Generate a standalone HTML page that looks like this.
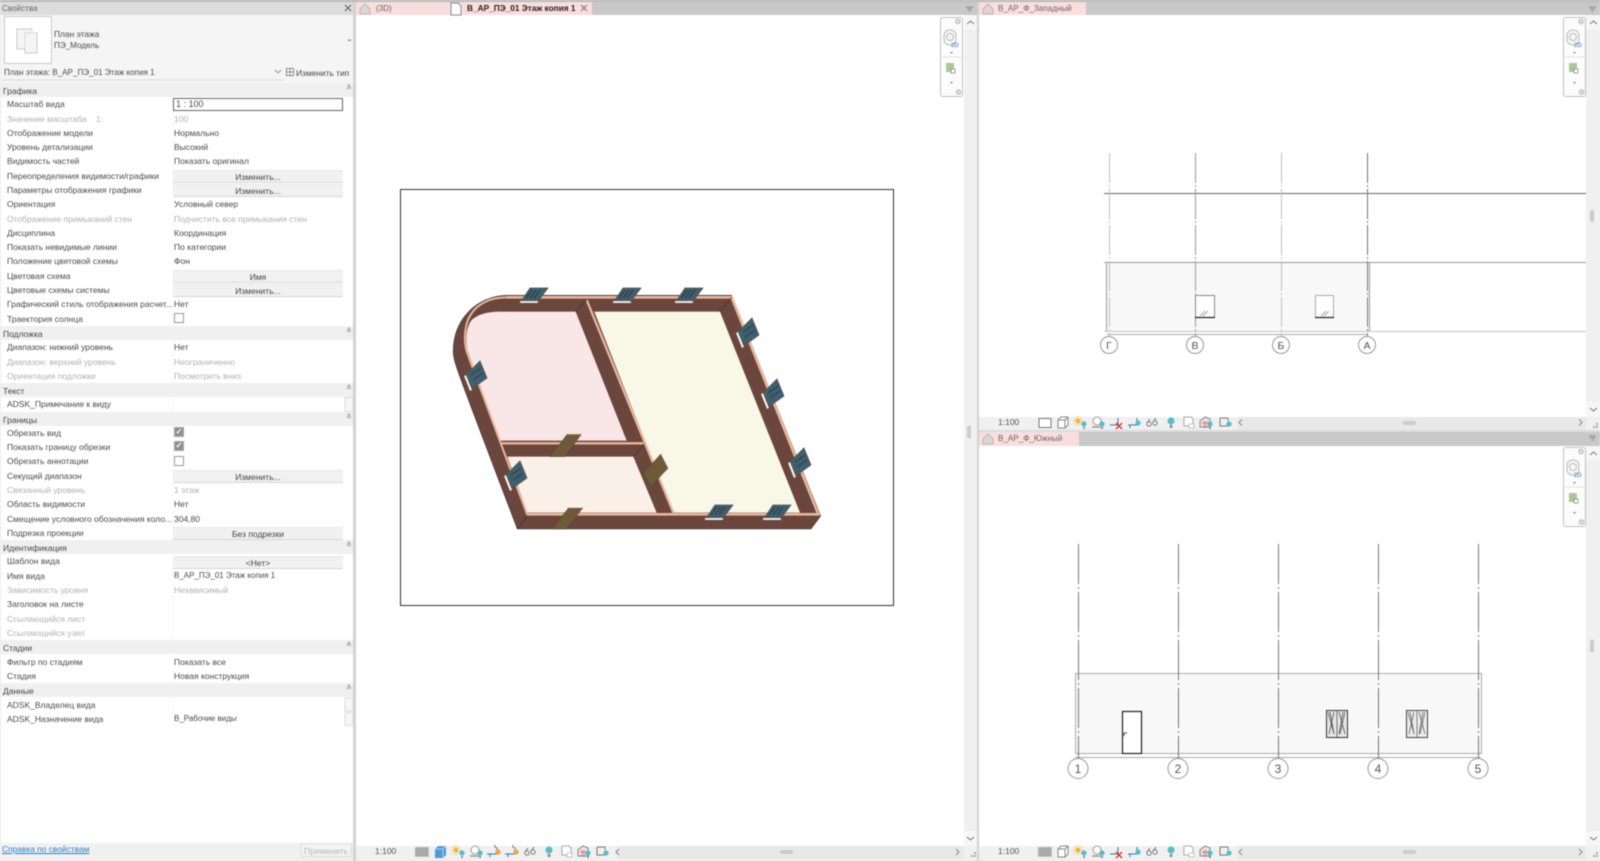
<!DOCTYPE html>
<html lang="ru"><head><meta charset="utf-8"><title>Revit</title>
<style>
html,body{margin:0;padding:0;width:1600px;height:861px;overflow:hidden;background:#efefef}
#w{position:absolute;left:0;top:0;width:1600px;height:861px;overflow:hidden;filter:blur(.45px);font:8.5px/14px "Liberation Sans",sans-serif;color:#4a4a4a}
.a,.r,.s,.l,.v,.b,.t{position:absolute;white-space:nowrap}
.s{left:1px;width:352px;height:14px;background:#f0f0f0;color:#444}
.s span{position:absolute;left:2px;top:1px}
.s i{position:absolute;left:345px;top:0;font:normal 7px/12px "Liberation Sans",sans-serif;color:#777}
.l{left:7px}.v{left:174px}
.d{color:#b0b0b0}
.b{left:173px;width:170px;height:13px;background:#f1f1f1;border-bottom:1px solid #d6d6d6;border-top:1px solid #e9e9e9;box-sizing:border-box;text-align:center;line-height:12px;color:#444;border-radius:1px}
.t{top:2px;height:13px;line-height:13px;color:#555;font-size:8.1px}
.c{position:absolute;left:174px;width:8px;height:8px;background:#fff;border:1px solid #999;box-sizing:content-box}
.k{position:absolute;left:174px;width:8px;height:8px;background:#8f8f8f;border:1px solid #a5a5a5;color:#fff;font:bold 8px/8px "Liberation Sans",sans-serif;text-align:center}
</style></head><body><div id="w">
<svg class="a" style="left:0;top:0" width="1600" height="861" viewBox="0 0 1600 861" xmlns="http://www.w3.org/2000/svg">
<defs>
<g id="tealb"><circle cx="11" cy="8" r="2.6" fill="#55bcc8"/><rect x="10.3" y="11" width="1.5" height="2" fill="#777"/></g>
<g id="i-fine"><rect x="1" y="2" width="14" height="10" fill="#c4c4c4"/><path d="M1 4h14M1 6h14M1 8h14M1 10h14M3 2v10M5 2v10M7 2v10M9 2v10M11 2v10M13 2v10" stroke="#777" stroke-width=".7" stroke-dasharray="1 1"/></g>
<g id="i-blue"><path d="M2 4l3-3h8v9l-3 3H2z" fill="#4e9bd6"/><path d="M2 4h8v9M10 4l3-3" fill="none" stroke="#a9d2ef"/></g>
<g id="i-rect"><rect x="2" y="2.5" width="12" height="9" fill="#fff" stroke="#777"/></g>
<g id="i-wire"><path d="M3 4l3-3h7v8l-3 3H3zM3 4h7v8M10 4l3-3" fill="#fff" stroke="#888"/></g>
<g id="i-sun"><circle cx="5" cy="5" r="2.6" fill="#f5b72c"/><path d="M5 0v1.5M5 8.5V10M0 5h1.5M8.5 5H10M1.5 1.5l1 1M7.5 7.5l1 1M8.5 1.5l-1 1M1.5 8.500l1-1" stroke="#f5b72c"/><use href="#tealb"/></g>
<g id="i-shadow"><circle cx="6" cy="5" r="4" fill="#fff" stroke="#999"/><path d="M1 11h9" stroke="#999" stroke-width="1.500"/><use href="#tealb"/></g>
<g id="i-crop"><path d="M1 9h9V2M8 0v3M0 9h3" fill="none" stroke="#3a74b8" stroke-width="1"/><circle cx="11" cy="7" r="2.600" fill="#f1a63f"/><path d="M3 12l0-3" stroke="#3a74b8"/></g>
<g id="i-cropt"><path d="M1 9h9V2" fill="none" stroke="#3a74b8" stroke-width="1"/><path d="M3 12l0-3" stroke="#3a74b8"/><circle cx="11" cy="7" r="2.600" fill="#55bcc8"/></g>
<g id="i-cropx"><path d="M1 9h8V2" fill="none" stroke="#3a74b8" stroke-width="1"/><path d="M7 7l6 6M13 7l-6 6" stroke="#e02b20" stroke-width="1.300"/></g>
<g id="i-glass"><circle cx="4" cy="8" r="2.200" fill="none" stroke="#777"/><circle cx="10" cy="7" r="2.200" fill="none" stroke="#777"/><path d="M2 7l3-4M8 6l3-4" stroke="#777"/></g>
<g id="i-bulb"><circle cx="8" cy="5" r="3.500" fill="#55bcc8"/><rect x="6.800" y="9" width="2.500" height="3" fill="#888"/></g>
<g id="i-dots"><path d="M3 1h7l2 2v7H3z" fill="#fff" stroke="#aaa"/><path d="M8 8h5v4H8z" fill="#fff" stroke="#999" stroke-dasharray="1 1"/></g>
<g id="i-house"><path d="M1 5l5-4 5 2v8H1z" fill="#e8e8e8" stroke="#888"/><path d="M3 7h6M5 5v7M7 5v7" stroke="#d66" stroke-width=".8"/><use href="#tealb"/></g>
<g id="i-frame"><path d="M2 2h8M2 2v8h9M10 2v3" fill="none" stroke="#777" stroke-width="1"/><circle cx="11" cy="8" r="2.600" fill="#55bcc8"/></g>
<g id="nav">
<rect x=".5" y=".5" width="22" height="79" rx="2" fill="#fcfcfc" stroke="#c0c0c0"/>
<circle cx="18" cy="4.500" r="2.300" fill="#ddd" stroke="#bbb"/>
<rect x="4" y="13" width="12" height="15" rx="5.500" fill="#f6f6f6" stroke="#bbb"/><circle cx="10" cy="20" r="3.500" fill="none" stroke="#bbb"/>
<text x="11" y="30" font-family="Liberation Sans" font-size="6" font-weight="bold" fill="#6a9bd0">2D</text>
<path d="M10 35l3 0-1.500 2z" fill="#888"/><path d="M2 40h19" stroke="#e2e2e2"/>
<rect x="6" y="46" width="8" height="9" fill="#a8c89a"/><rect x="11" y="52" width="4" height="4" fill="#fff" stroke="#888" stroke-width=".8"/>
<path d="M10 65l3 0-1.500 2z" fill="#888"/><circle cx="18.500" cy="75" r="2.300" fill="#ddd" stroke="#bbb"/>
</g>
<g id="win"><path d="M8 0H26L17 12H0z" fill="#3f5f6e" stroke="#555" stroke-width=".8"/><path d="M10 2l-6 8M14 2l-6 8M18 2l-6 8" stroke="#1e2d36" stroke-width=".7"/><path d="M-2 13H16V15H-2z" fill="#fff" stroke="#777" stroke-width=".4"/></g>
<g id="winr"><path d="M-1 13L13-1 20 16 6 26z" fill="#3f5f6e" stroke="#555" stroke-width=".8"/><path d="M4 13l10-7M6 18l10-7" stroke="#1e2d36" stroke-width=".7"/><path d="M-1 13L5 28 3 29-3 14z" fill="#fff" stroke="#777" stroke-width=".4"/></g>
</defs>

<!-- chrome backgrounds -->
<rect x="0" y="0" width="1600" height="2" fill="#b8b8b8"/>
<rect x="0" y="2" width="353" height="13" fill="#dcdcdc"/>
<rect x="1" y="15" width="352" height="68" fill="#f5f5f5"/>
<rect x="1" y="83" width="352" height="760" fill="#fff"/>
<rect x="0" y="843" width="353" height="16" fill="#f0f0f0"/>
<rect x="353" y="2" width="3" height="859" fill="#d2d2d2"/>
<rect x="4.500" y="16.500" width="47" height="47" fill="#fff" stroke="#c8c8c8"/>
<path d="M17 29h15v4h5v20H25v-4h-8z" fill="#f5f5f5" stroke="#c8c8c8"/><path d="M25 33h12M25 33v16M32 29v4" stroke="#d8d8d8" fill="none"/>
<path d="M2 80h282" stroke="#d8d8d8"/>
<path d="M275 70l3 3 3-3" fill="none" stroke="#999"/>
<rect x="286.500" y="68.500" width="7" height="7" fill="#fff" stroke="#888"/><path d="M286 72h8M290 68v8" stroke="#888"/>
<path d="M345 5l6 6M351 5l-6 6" stroke="#666" stroke-width="1.200"/>
<path d="M347 39.500h5l-2.500 2z" fill="#999"/>
<rect x="345" y="397.500" width="8" height="14" fill="#f6f6f6" stroke="#dcdcdc"/>
<rect x="345" y="698" width="8" height="13" fill="#f6f6f6" stroke="#dcdcdc"/>
<rect x="345" y="712.500" width="8" height="13" fill="#f6f6f6" stroke="#dcdcdc"/>
<rect x="301" y="843.500" width="50" height="13" rx="1" fill="#f3f3f3" stroke="#dcdcdc"/>
<path d="M173 84v635" stroke="#efefef" stroke-dasharray="1 1"/>

<!-- main pane -->
<rect x="356" y="15" width="621" height="831" fill="#fff"/>
<rect x="356" y="2" width="621" height="13" fill="#c8c8c8"/>
<rect x="356" y="2" width="236" height="13" fill="#fadddd"/>
<path d="M360 9l5-5 5 5v5h-10z" fill="#ddd6d6" stroke="#b8b8b8"/>
<path d="M451 3h7l3 3v9h-10z" fill="#fff" stroke="#888"/>
<path d="M581 5l6 6M587 5l-6 6" stroke="#777" stroke-width="1.100"/>
<path d="M966 7h7M967 9h5M968.500 11h2" stroke="#888"/>
<rect x="964" y="15" width="13" height="831" fill="#f0f0f0"/>
<rect x="964" y="15" width="13" height="15" fill="#f6f6f6"/><path d="M967 24l3.500-3 3.500 3" fill="none" stroke="#777"/>
<rect x="964" y="831" width="13" height="15" fill="#f6f6f6"/><path d="M967 837l3.500 3 3.500-3" fill="none" stroke="#777"/>
<rect x="967" y="426" width="4" height="12" rx="1" fill="#ccc"/>
<use href="#nav" x="940" y="17"/>
<rect x="356" y="846" width="621" height="13" fill="#f0f0f0"/>
<rect x="617" y="846" width="347" height="13" fill="#e8e8e8"/>
<path d="M619 849l-3 3 3 3M956 849l3 3-3 3" fill="none" stroke="#888"/>
<rect x="780" y="850" width="13" height="4" rx="2" fill="#ccc"/>
<g fill="#aaa"><rect x="971" y="855" width="2" height="2"/><rect x="974" y="855" width="2" height="2"/><rect x="974" y="852" width="2" height="2"/></g>
<use href="#i-fine" x="414" y="845"/><use href="#i-blue" x="433" y="845"/><use href="#i-sun" x="451" y="845"/><use href="#i-shadow" x="469" y="845"/><use href="#i-crop" x="487" y="845"/><use href="#i-crop" x="505" y="845"/><use href="#i-glass" x="523" y="845"/><use href="#i-bulb" x="541" y="845"/><use href="#i-dots" x="559" y="845"/><use href="#i-house" x="577" y="845"/><use href="#i-frame" x="595" y="845"/>

<!-- plan -->
<rect x="400.500" y="189.500" width="493" height="416" fill="#fff" stroke="#333"/>
<g transform="translate(430 270) scale(.3333)">
<path d="M262 777H1143L1172 738 905 76H230C140 78 66 150 70 250 72 280 85 310 262 777z" fill="#6b463c" stroke="#3c3c3c" stroke-width="2"/>
<path d="M215 125H437L590 512H210L112 240C105 200 110 170 125 150 150 128 185 125 215 125z" fill="#f9e6e6"/>
<path d="M493 125H870L1110 728H730z" fill="#f9f8e8"/>
<path d="M232 560H610L680 728H292z" fill="#faf0e8"/>
<path d="M230 82H905L1166 735M292 733H1170" fill="none" stroke="#e9b79b" stroke-width="8"/>
<path d="M230 82C165 82 120 115 108 170 102 200 105 230 112 250L292 735" fill="none" stroke="#e9b79b" stroke-width="6"/>
<path d="M470 90L730 728M210 520H640" fill="none" stroke="#e9b79b" stroke-width="7"/>
<path d="M262 777L292 738M905 82L870 125M470 90L437 125M640 525L610 560" stroke="#44302a" stroke-width="2"/>
<path d="M412 492H455L405 560H360z" fill="#6f5a38" stroke="#333" stroke-width="1"/><path d="M412 492H455" stroke="#d8d090" stroke-width="3"/>
<path d="M417 712H460L410 777H365z" fill="#6f5a38" stroke="#333" stroke-width="1"/><path d="M417 712H460" stroke="#fff" stroke-width="3"/>
<path d="M692 552L714 595 662 650 640 610z" fill="#6f5a38" stroke="#333" stroke-width="1"/>
<g transform="scale(3)">
<use href="#win" x="92" y="18"/><use href="#win" x="185" y="18"/><use href="#win" x="247" y="18"/>
<use href="#win" x="277" y="235"/><use href="#win" x="335" y="235"/>
<use href="#winr" x="309" y="49"/><use href="#winr" x="334" y="110"/><use href="#winr" x="361" y="179"/>
<use href="#winr" x="37" y="92"/><use href="#winr" x="77" y="192"/>
</g>
</g>

<rect x="977" y="2" width="2" height="859" fill="#d2d2d2"/>

<!-- top right pane -->
<rect x="979" y="15" width="621" height="402" fill="#fff"/>
<rect x="979" y="2" width="621" height="13" fill="#c8c8c8"/>
<rect x="979" y="2" width="107" height="13" fill="#fadddd"/>
<path d="M983 9l5-5 5 5v5h-10z" fill="#ddd6d6" stroke="#b8b8b8"/>
<path d="M1589 7h7M1590 9h5M1591.500 11h2" stroke="#888"/>
<rect x="1586" y="15" width="14" height="402" fill="#f0f0f0"/>
<rect x="1586" y="15" width="14" height="15" fill="#f6f6f6"/><path d="M1590 24l3.500-3 3.500 3" fill="none" stroke="#777"/>
<rect x="1586" y="402" width="14" height="15" fill="#f6f6f6"/><path d="M1590 408l3.500 3 3.500-3" fill="none" stroke="#777"/>
<rect x="1590" y="210" width="4" height="12" rx="1" fill="#ccc"/>
<use href="#nav" x="1563" y="17"/>
<rect x="979" y="417" width="621" height="13" fill="#f0f0f0"/>
<rect x="1238" y="417" width="348" height="13" fill="#e8e8e8"/>
<path d="M1242 419.500l-3 3 3 3M1579 419.500l3 3-3 3" fill="none" stroke="#888"/>
<rect x="1403" y="421" width="13" height="4" rx="2" fill="#ccc"/>
<g fill="#aaa"><rect x="1593" y="426" width="2" height="2"/><rect x="1596" y="426" width="2" height="2"/><rect x="1596" y="423" width="2" height="2"/></g>
<use href="#i-rect" x="1037" y="416"/><use href="#i-wire" x="1055" y="416"/><use href="#i-sun" x="1073" y="416"/><use href="#i-shadow" x="1091" y="416"/><use href="#i-cropx" x="1109" y="416"/><use href="#i-cropt" x="1127" y="416"/><use href="#i-glass" x="1145" y="416"/><use href="#i-bulb" x="1163" y="416"/><use href="#i-dots" x="1181" y="416"/><use href="#i-house" x="1199" y="416"/><use href="#i-frame" x="1218" y="416"/>

<rect x="1106" y="262" width="263" height="69" fill="#f8f8f8"/>
<path d="M1104 193.500H1586" stroke="#666"/>
<path d="M1104 262.500H1586" stroke="#999"/>
<path d="M1104 331.500H1586" stroke="#c4c4c4"/>
<path d="M1107 334.500H1368" stroke="#aaa"/>
<path d="M1106.500 262V331M1369.500 262V331" stroke="#999"/>
<path d="M1109.500 153V337" stroke="#c0c0c0" stroke-dasharray="30 2 2 2"/>
<path d="M1195.500 153V337" stroke="#999" stroke-dasharray="30 2 2 2"/>
<path d="M1281.500 153V337" stroke="#c0c0c0" stroke-dasharray="30 2 2 2"/>
<path d="M1367.500 153V337" stroke="#777" stroke-dasharray="30 2 2 2"/>
<rect x="1195.500" y="295.500" width="19" height="22" fill="#fff" stroke="#888"/><path d="M1195 317.500h20" stroke="#222" stroke-width="1.200"/><path d="M1200 316l5-5M1203 316l5-5" stroke="#aaa"/>
<rect x="1315.500" y="295.500" width="18" height="22" fill="#fff" stroke="#aaa"/><path d="M1315 317.500h19" stroke="#222" stroke-width="1.200"/><path d="M1321 316l5-5M1324 316l5-5" stroke="#aaa"/>
<g fill="#fff" stroke="#999"><circle cx="1109" cy="345" r="8.500"/><circle cx="1195" cy="345" r="8.500"/><circle cx="1281" cy="345" r="8.500"/><circle cx="1367" cy="345" r="8.500"/></g>
<g font-family="Liberation Sans" font-size="10.500" fill="#555" text-anchor="middle"><text x="1109" y="349">Г</text><text x="1195" y="349">В</text><text x="1281" y="349">Б</text><text x="1367" y="349">А</text></g>

<!-- bottom right pane -->
<rect x="979" y="430" width="621" height="2" fill="#dcdcdc"/>
<rect x="979" y="446" width="621" height="400" fill="#fff"/>
<rect x="979" y="432" width="621" height="14" fill="#c8c8c8"/>
<rect x="979" y="432" width="100" height="14" fill="#fadddd"/>
<path d="M983 439l5-5 5 5v5h-10z" fill="#ddd6d6" stroke="#b8b8b8"/>
<path d="M1589 436h7M1590 438h5M1591.500 440h2" stroke="#888"/>
<rect x="1586" y="446" width="14" height="400" fill="#f0f0f0"/>
<rect x="1586" y="446" width="14" height="15" fill="#f6f6f6"/><path d="M1590 455l3.500-3 3.500 3" fill="none" stroke="#777"/>
<rect x="1586" y="831" width="14" height="15" fill="#f6f6f6"/><path d="M1590 837l3.500 3 3.500-3" fill="none" stroke="#777"/>
<rect x="1590" y="640" width="4" height="12" rx="1" fill="#ccc"/>
<use href="#nav" x="1563" y="447"/>
<rect x="979" y="846" width="621" height="13" fill="#f0f0f0"/>
<rect x="1238" y="846" width="348" height="13" fill="#e8e8e8"/>
<path d="M1242 849l-3 3 3 3M1579 849l3 3-3 3" fill="none" stroke="#888"/>
<rect x="1403" y="850" width="13" height="4" rx="2" fill="#ccc"/>
<g fill="#aaa"><rect x="1593" y="855" width="2" height="2"/><rect x="1596" y="855" width="2" height="2"/><rect x="1596" y="852" width="2" height="2"/></g>
<use href="#i-fine" x="1037" y="845"/><use href="#i-wire" x="1055" y="845"/><use href="#i-sun" x="1073" y="845"/><use href="#i-shadow" x="1091" y="845"/><use href="#i-cropx" x="1109" y="845"/><use href="#i-cropt" x="1127" y="845"/><use href="#i-glass" x="1145" y="845"/><use href="#i-bulb" x="1163" y="845"/><use href="#i-dots" x="1181" y="845"/><use href="#i-house" x="1199" y="845"/><use href="#i-frame" x="1218" y="845"/>

<rect x="1075.500" y="673.500" width="406" height="80" fill="#f8f8f8" stroke="#aaa"/>
<path d="M1075 757.500H1481" stroke="#aaa"/>
<g stroke="#777" stroke-dasharray="40 3 2 3">
<path d="M1078.500 544V758"/><path d="M1178.500 544V758"/><path d="M1278.500 544V758"/><path d="M1378.500 544V758"/><path d="M1478.500 544V758"/>
</g>
<rect x="1122.500" y="711.500" width="19" height="42" fill="#fff" stroke="#222" stroke-width="1.200"/><path d="M1124 733h3M1124 733v3" stroke="#444"/>
<g><rect x="1326.500" y="710.500" width="21" height="27" fill="#e6e6e6" stroke="#333"/><path d="M1337 710v27M1328 712l6 22M1334 712l-5 22M1339 712l6 22M1345 712l-5 22M1330 712l4 22M1343 712l-4 22" stroke="#555" stroke-width=".8"/>
<rect x="1406.500" y="710.500" width="21" height="27" fill="#ececec" stroke="#444"/><path d="M1417 710v27M1408 712l6 22M1414 712l-5 22M1419 712l6 22M1425 712l-5 22M1410 712l4 22M1423 712l-4 22" stroke="#666" stroke-width=".8"/></g>
<g fill="#fff" stroke="#999"><circle cx="1078" cy="768.500" r="10"/><circle cx="1178" cy="768.500" r="10"/><circle cx="1278" cy="768.500" r="10"/><circle cx="1378" cy="768.500" r="10"/><circle cx="1478" cy="768.500" r="10"/></g>
<g font-family="Liberation Sans" font-size="12" fill="#555" text-anchor="middle"><text x="1078" y="773">1</text><text x="1178" y="773">2</text><text x="1278" y="773">3</text><text x="1378" y="773">4</text><text x="1478" y="773">5</text></g>
</svg>

<!-- tab text -->
<div class="t" style="left:2px;color:#666">Свойства</div>
<div class="t" style="left:376px;color:#666">(3D)</div>
<div class="t" style="left:467px;color:#222;font-weight:bold;font-size:8.300px">В_АР_ПЭ_01 Этаж копия 1</div>
<div class="t" style="left:998px;color:#666">В_АР_Ф_Западный</div>
<div class="t" style="left:998px;top:432px;color:#666">В_АР_Ф_Южный</div>
<div class="t" style="left:375px;top:845px;color:#555;font-size:8.500px">1:100</div>
<div class="t" style="left:998px;top:416px;color:#555;font-size:8.500px">1:100</div>
<div class="t" style="left:998px;top:845px;color:#555;font-size:8.500px">1:100</div>

<!-- properties header -->
<div class="a" style="left:54px;top:27px;font-size:8.400px">План этажа</div>
<div class="a" style="left:54px;top:39px;font-size:8.100px">ПЭ_Модель</div>
<div class="a" style="left:4px;top:66px;font-size:8.100px">План этажа: В_АР_ПЭ_01 Этаж копия 1</div>
<div class="a" style="left:296px;top:66px;font-size:8.400px">Изменить тип</div>

<div class="s" style="top:83px"><span>Графика</span><i>≛</i></div>
<div class="l" style="top:97px">Масштаб вида</div>
<div class="a" style="left:173px;top:98px;width:170px;height:13px;box-sizing:border-box;background:#fff;border:1px solid #666;line-height:11px;padding-left:2px;font-size:9px">1 : 100</div>
<div class="l d" style="top:112px">Значение масштаба &nbsp;&nbsp;&nbsp;1:</div><div class="v d" style="top:112px">100</div>
<div class="l" style="top:126px">Отображение модели</div><div class="v" style="top:126px">Нормально</div>
<div class="l" style="top:140px">Уровень детализации</div><div class="v" style="top:140px">Высокий</div>
<div class="l" style="top:154px">Видимость частей</div><div class="v" style="top:154px">Показать оригинал</div>
<div class="l" style="top:169px">Переопределения видимости/графики</div><div class="b" style="top:170px">Изменить...</div>
<div class="l" style="top:183px">Параметры отображения графики</div><div class="b" style="top:184px">Изменить...</div>
<div class="l" style="top:197px">Ориентация</div><div class="v" style="top:197px">Условный север</div>
<div class="l d" style="top:212px">Отображение примыканий стен</div><div class="v d" style="top:212px">Подчистить все примыкания стен</div>
<div class="l" style="top:226px">Дисциплина</div><div class="v" style="top:226px">Координация</div>
<div class="l" style="top:240px">Показать невидимые линии</div><div class="v" style="top:240px">По категории</div>
<div class="l" style="top:254px">Положение цветовой схемы</div><div class="v" style="top:254px">Фон</div>
<div class="l" style="top:269px">Цветовая схема</div><div class="b" style="top:270px">Имя</div>
<div class="l" style="top:283px">Цветовые схемы системы</div><div class="b" style="top:284px">Изменить...</div>
<div class="l" style="top:297px">Графический стиль отображения расчет...</div><div class="v" style="top:297px">Нет</div>
<div class="l" style="top:312px">Траектория солнца</div><div class="c" style="top:313px"></div>

<div class="s" style="top:326px"><span>Подложка</span><i>≛</i></div>
<div class="l" style="top:340px">Диапазон: нижний уровень</div><div class="v" style="top:340px">Нет</div>
<div class="l d" style="top:355px">Диапазон: верхний уровень</div><div class="v d" style="top:355px">Неограниченно</div>
<div class="l d" style="top:369px">Ориентация подложки</div><div class="v d" style="top:369px">Посмотреть вниз</div>

<div class="s" style="top:383px"><span>Текст</span><i>≛</i></div>
<div class="l" style="top:397px">ADSK_Примечание к виду</div>

<div class="s" style="top:412px"><span>Границы</span><i>≛</i></div>
<div class="l" style="top:426px">Обрезать вид</div><div class="k" style="top:427px">✓</div>
<div class="l" style="top:440px">Показать границу обрезки</div><div class="k" style="top:441px">✓</div>
<div class="l" style="top:454px">Обрезать аннотации</div><div class="c" style="top:456px"></div>
<div class="l" style="top:469px">Секущий диапазон</div><div class="b" style="top:470px">Изменить...</div>
<div class="l d" style="top:483px">Связанный уровень</div><div class="v d" style="top:483px">1 этаж</div>
<div class="l" style="top:497px">Область видимости</div><div class="v" style="top:497px">Нет</div>
<div class="l" style="top:512px">Смещение условного обозначения коло...</div><div class="v" style="top:512px">304,80</div>
<div class="l" style="top:526px">Подрезка проекции</div><div class="b" style="top:527px">Без подрезки</div>

<div class="s" style="top:540px"><span>Идентификация</span><i>≛</i></div>
<div class="l" style="top:554px">Шаблон вида</div><div class="b" style="top:556px">&lt;Нет&gt;</div>
<div class="l" style="top:569px">Имя вида</div><div class="v" style="top:569px;font-size:8px">В_АР_ПЭ_01 Этаж копия 1</div>
<div class="l d" style="top:583px">Зависимость уровня</div><div class="v d" style="top:583px">Независимый</div>
<div class="l" style="top:597px">Заголовок на листе</div>
<div class="l d" style="top:612px">Ссылающийся лист</div>
<div class="l d" style="top:626px">Ссылающийся узел</div>

<div class="s" style="top:640px"><span>Стадии</span><i>≛</i></div>
<div class="l" style="top:655px">Фильтр по стадиям</div><div class="v" style="top:655px">Показать все</div>
<div class="l" style="top:669px">Стадия</div><div class="v" style="top:669px">Новая конструкция</div>

<div class="s" style="top:683px"><span>Данные</span><i>≛</i></div>
<div class="l" style="top:698px">ADSK_Владелец вида</div>
<div class="l" style="top:712px">ADSK_Назначение вида</div><div class="v" style="top:712px;font-size:8px">В_Рабочие виды</div>

<div class="a" style="left:2px;top:842px;color:#2f7fc1;text-decoration:underline;font-size:8.400px">Справка по свойствам</div>
<div class="a" style="left:304px;top:844px;color:#b8b8b8">Применить</div>
</div></body></html>
